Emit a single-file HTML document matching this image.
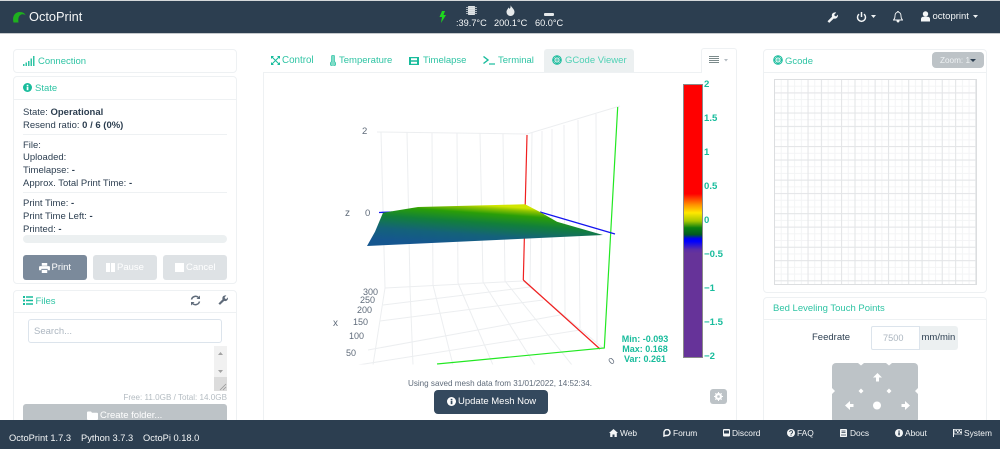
<!DOCTYPE html>
<html><head><meta charset="utf-8"><title>OctoPrint</title>
<style>
html,body{margin:0;padding:0;background:#fff}
#r{position:relative;width:1000px;height:449px;overflow:hidden;background:#fff;font-family:"Liberation Sans",sans-serif;font-size:9.5px;color:#2c3e50;filter:blur(.3px)}
#r div,#r span,#r svg{position:absolute}
.t{white-space:nowrap;line-height:12px;height:12px}
.g{color:#2fc4a4}
.w{color:#f4f6f7}
.box{border:1px solid #eef1f3;border-radius:4px;background:#fff;box-sizing:border-box}
.hr{height:1px;background:#eef1f3}
b{font-weight:bold}
.btn{border-radius:3px;box-sizing:border-box}
.cb{color:#18bc9c;font-weight:bold;font-size:9.600px;line-height:12px;left:704px;white-space:nowrap}
.ax{color:#5f6b7a;font-size:9px;line-height:12px;white-space:nowrap}
.st{color:#18bc9c;font-weight:bold;font-size:9px;line-height:10px;width:70px;left:610px;text-align:center}
</style></head><body><div id="r">

<!-- navbar -->
<div style="left:0;top:0;width:1000px;height:34px;background:#2c3e50;border-top:1px solid #d5d8da;border-bottom:1px solid #c5c9cc;box-sizing:border-box"></div>
<svg style="left:12px;top:10px" width="15" height="14" viewBox="0 0 15 14"><path d="M1.500 12.500C0 6 3 2 8 2c3 0 5 1.500 5.700 3.500-1.700-1.500-3.700-1.500-5.200-.5C6.500 6 6 9 6.500 12.500z" fill="#1eb01e"/></svg>
<span class="t w" style="left:29px;top:10px;font-size:12.800px;line-height:14px;height:14px">OctoPrint</span>
<svg style="left:439px;top:11px" width="7" height="12" viewBox="0 0 7 12"><path d="M3 0h3L4.500 4H7L2 12l1-6H0.500z" fill="#1ed81e"/></svg>
<svg style="left:466px;top:5px" width="11" height="11" viewBox="0 0 11 11"><rect x="2" y="1" width="7" height="9" rx=".7" fill="#dfe3e6"/><path d="M0 2.500h11M0 4.500h11M0 6.500h11M0 8.500h11" stroke="#c9ced2" stroke-width=".8"/></svg>
<span class="t w" style="left:456px;top:17px;font-size:9.200px">:39.7°C</span>
<svg style="left:506px;top:5px" width="9" height="11" viewBox="0 0 9 11"><path d="M4.500 0C5 2 8.500 4 8.500 7a4 4 0 0 1-8 0C.5 5 2 4 2.500 2.500c.5.500 1 1 1 1.500C4.500 3 4.800 1.500 4.500 0z" fill="#e6e9eb"/></svg>
<span class="t w" style="left:494px;top:17px;font-size:9.200px">200.1°C</span>
<div style="left:544px;top:12.500px;width:10px;height:3px;background:#e6e9eb;border-radius:1px"></div>
<span class="t w" style="left:535px;top:17px;font-size:9.200px">60.0°C</span>
<svg style="left:827px;top:12px" width="11" height="11" viewBox="0 0 11 11"><path d="M0.500 9.300L5 4.800C4.500 3 5 1.500 6.500.8 7.500.3 8.500.3 9.200.6L7.300 2.500l.4 1.500 1.500.4 1.600-1.800c.4 1.200 0 2.500-1 3.400-1 .8-2 .9-3 .5l-4.600 4.400z" fill="#f4f6f7"/></svg>
<svg style="left:856px;top:11px" width="11" height="12" viewBox="0 0 11 12"><path d="M3 3.200A4 4 0 1 0 8 3.200" fill="none" stroke="#f4f6f7" stroke-width="1.500"/><path d="M5.500 1v5" stroke="#f4f6f7" stroke-width="1.500"/></svg>
<svg style="left:871px;top:15px" width="5" height="3" viewBox="0 0 5 3"><path d="M0 0h5L2.500 3z" fill="#eef1f3"/></svg>
<svg style="left:893px;top:11px" width="10" height="12" viewBox="0 0 10 12"><path d="M5 .5c.5 0 .7.300.7.800C7.500 1.800 8 3 8 5c0 2 .5 3 1.500 4h-9C1.500 8 2 7 2 5c0-2 .5-3.200 2.300-3.700C4.300.8 4.500.5 5 .5zM4 10h2a1 1 0 0 1-2 0z" fill="none" stroke="#f4f6f7" stroke-width=".9"/></svg>
<svg style="left:921px;top:11px" width="9" height="11" viewBox="0 0 9 11"><circle cx="4.500" cy="3" r="2.700" fill="#f4f6f7"/><path d="M0 10.500V8c0-1.500 1-2.300 2.500-2.300h4C8 5.700 9 6.500 9 8v2.500z" fill="#f4f6f7"/></svg>
<span class="t w" style="left:932.500px;top:11px;font-size:9.500px">octoprint</span>
<svg style="left:973px;top:15px" width="5" height="3" viewBox="0 0 5 3"><path d="M0 0h5L2.500 3z" fill="#eef1f3"/></svg>

<!-- left column -->
<div class="box" style="left:13px;top:49px;width:224px;height:24px"></div>
<svg style="left:23px;top:56px" width="12" height="10" viewBox="0 0 12 10"><path d="M0 8h1.500v2H0zM2.500 6.500H4V10H2.500zM5 5h1.500v5H5zM7.500 2.500H9V10H7.500zM10 0h1.500v10H10z" fill="#2fc4a4"/></svg>
<span class="t g" style="left:38px;top:55.500px">Connection</span>
<div class="box" style="left:13px;top:76px;width:224px;height:208px"></div>
<div class="hr" style="left:13px;top:99px;width:224px"></div>
<svg style="left:23px;top:83px" width="9" height="9" viewBox="0 0 9 9"><circle cx="4.500" cy="4.500" r="4.500" fill="#18bc9c"/><rect x="3.700" y="3.700" width="1.700" height="3.500" fill="#fff"/><rect x="3.700" y="1.800" width="1.700" height="1.300" fill="#fff"/></svg>
<span class="t g" style="left:35px;top:82.500px">State</span>
<span class="t" style="left:23px;top:107px">State: <b>Operational</b></span>
<span class="t" style="left:23px;top:120px">Resend ratio: <b>0 / 6 (0%)</b></span>
<div class="hr" style="left:23px;top:134px;width:204px"></div>
<span class="t" style="left:23px;top:140px">File:</span>
<span class="t" style="left:23px;top:152px">Uploaded:</span>
<span class="t" style="left:23px;top:165px">Timelapse: <b>-</b></span>
<span class="t" style="left:23px;top:178px">Approx. Total Print Time: <b>-</b></span>
<div class="hr" style="left:23px;top:192px;width:204px"></div>
<span class="t" style="left:23px;top:198px">Print Time: <b>-</b></span>
<span class="t" style="left:23px;top:211px">Print Time Left: <b>-</b></span>
<span class="t" style="left:23px;top:224px">Printed: <b>-</b></span>
<div style="left:23px;top:235px;width:204px;height:8px;background:#ecf0f1;border-radius:4px"></div>
<div class="btn" style="left:23px;top:255px;width:64px;height:25px;background:#7b8a9b"></div>
<svg style="left:39px;top:262.500px" width="11" height="10" viewBox="0 0 12 11"><path d="M3 0h6v3H3zM1 3.500h10a1 1 0 0 1 1 1V8H9.500V6.500h-7V8H0V4.500a1 1 0 0 1 1-1zM3 7.500h6V11H3z" fill="#fff"/></svg>
<span class="t" style="left:51.500px;top:262px;color:#fff">Print</span>
<div class="btn" style="left:93px;top:255px;width:64px;height:25px;background:#dee2e5"></div>
<div style="left:106px;top:263px;width:3.500px;height:9px;background:#fff"></div><div style="left:111px;top:263px;width:3.500px;height:9px;background:#fff"></div>
<span class="t" style="left:117px;top:262px;color:#fff">Pause</span>
<div class="btn" style="left:163px;top:255px;width:64px;height:25px;background:#dee2e5"></div>
<div style="left:175px;top:263px;width:8.500px;height:9px;background:#fff"></div>
<span class="t" style="left:186px;top:262px;color:#fff">Cancel</span>

<div class="box" style="left:13px;top:290px;width:224px;height:140px"></div>
<div class="hr" style="left:13px;top:312px;width:224px"></div>
<svg style="left:23px;top:296px" width="10" height="9" viewBox="0 0 10 9"><path d="M0 0h2v2H0zM3 .3h7v1.500H3zM0 3.500h2v2H0zM3 3.800h7v1.500H3zM0 7h2v2H0zM3 7.200h7v1.500H3z" fill="#18bc9c"/></svg>
<span class="t g" style="left:35.500px;top:295.500px">Files</span>
<svg style="left:190px;top:295px" width="11" height="11" viewBox="0 0 11 11"><path d="M1.500 4.500A4.200 4.200 0 0 1 8.500 2.500M9.500 6.500A4.200 4.200 0 0 1 2.500 8.500" fill="none" stroke="#5f6b7a" stroke-width="1.500"/><path d="M10 .5v3.500H6.500zM1 10.500V7h3.500z" fill="#5f6b7a"/></svg>
<svg style="left:218px;top:295px" width="10" height="10" viewBox="0 0 11 11"><path d="M0.500 9.300L5 4.800C4.500 3 5 1.500 6.500.8 7.500.3 8.500.3 9.200.6L7.300 2.500l.4 1.500 1.500.4 1.600-1.800c.4 1.200 0 2.500-1 3.400-1 .8-2 .9-3 .5l-4.600 4.400z" fill="#5f6b7a"/></svg>
<div style="left:28px;top:319px;width:194px;height:24px;border:1px solid #dce4ec;border-radius:3px;box-sizing:border-box"></div>
<span class="t" style="left:34px;top:325.500px;color:#acb6c0">Search...</span>
<div style="left:214px;top:346px;width:13px;height:45px;background:#f1f1f1"></div>
<div style="left:214px;top:377px;width:13px;height:14px;background:#dcdcdc"></div>
<svg style="left:214px;top:350px" width="13" height="41" viewBox="0 0 13 41"><path d="M4 5l2.500-3L9 5zM4 20l2.500 3L9 20z" fill="#a3a3a3"/><path d="M6 40l6-6M9 40l3-3" stroke="#999" stroke-width=".8"/></svg>
<span class="t" style="left:97px;top:391.500px;color:#b4bcc2;font-size:8.100px;width:130px;text-align:right">Free: 11.0GB / Total: 14.0GB</span>
<div class="btn" style="left:23px;top:404px;width:204px;height:20px;background:#bdc3c7"></div>
<svg style="left:87px;top:411px" width="11" height="9" viewBox="0 0 11 9"><path d="M0 1.500a1 1 0 0 1 1-1h3l1 1.200h5a1 1 0 0 1 1 1V8a1 1 0 0 1-1 1H1a1 1 0 0 1-1-1z" fill="#fff"/></svg>
<span class="t" style="left:100px;top:410px;color:#fff">Create folder...</span>

<!-- center tabs -->
<div style="left:263px;top:72px;width:474px;height:352px;border:1px solid #eef1f3;box-sizing:border-box"></div>
<div style="left:544px;top:49px;width:90px;height:23px;background:#ecf0f1;border-radius:3px 3px 0 0"></div>
<div style="left:701px;top:48px;width:36px;height:25px;background:#fff;border:1px solid #eef1f3;border-bottom:0;border-radius:3px 3px 0 0;box-sizing:border-box"></div>
<svg style="left:271px;top:56px" width="9" height="9" viewBox="0 0 9 9"><path d="M0 0h3L0 3zM9 0v3L6 0zM0 9V6l3 3zM9 9H6l3-3z" fill="#18bc9c"/><path d="M1 1l7 7M8 1L1 8" stroke="#18bc9c" stroke-width="1"/></svg>
<span class="t g" style="left:282px;top:55px;font-size:9.800px">Control</span>
<svg style="left:330px;top:55px" width="6" height="11" viewBox="0 0 6 11"><path d="M1.500 1.500a1.500 1.500 0 0 1 3 0v5a2.700 2.700 0 1 1-3 0z" fill="#7fdcc7" stroke="#18bc9c" stroke-width=".6"/></svg>
<span class="t g" style="left:339px;top:55px">Temperature</span>
<svg style="left:409px;top:57px" width="10" height="8" viewBox="0 0 10 8"><path d="M0 0h10v8H0zM2 1.300v2h6v-2zM2 4.700v2h6v-2z" fill="#18bc9c" fill-rule="evenodd"/></svg>
<span class="t g" style="left:423px;top:55px">Timelapse</span>
<svg style="left:483px;top:56px" width="12" height="9" viewBox="0 0 12 9"><path d="M.5.500L5 4 .5 7.500" fill="none" stroke="#18bc9c" stroke-width="1.400"/><path d="M6 8h6" stroke="#18bc9c" stroke-width="1.200"/></svg>
<span class="t g" style="left:498px;top:55px">Terminal</span>
<svg style="left:552px;top:55px" width="10" height="10" viewBox="0 0 10 10"><circle cx="5" cy="5" r="4.300" fill="none" stroke="#18bc9c" stroke-width="1"/><path d="M5 1L1 5l4 4 4-4zM1 5h8M5 1v8" fill="none" stroke="#18bc9c" stroke-width=".8"/></svg>
<span class="t g" style="left:565px;top:55px;color:#4fd1b5">GCode Viewer</span>
<svg style="left:709px;top:56px" width="22" height="8" viewBox="0 0 22 8"><path d="M0 .5h10M0 2.500h10M0 4.500h10M0 6.500h10" stroke="#7b8a8b" stroke-width="1"/><path d="M15 3h4l-2 2.500z" fill="#b4bcc2"/></svg>

<!-- 3D plot -->
<svg style="left:263px;top:73px" width="420" height="292" viewBox="263 73 420 292">
<defs>
<linearGradient id="m" gradientUnits="userSpaceOnUse" x1="470" y1="204" x2="467" y2="246">
<stop offset="0" stop-color="#d2e600"/><stop offset=".07" stop-color="#8fc400"/><stop offset=".2" stop-color="#2a9e08"/><stop offset=".42" stop-color="#12803a"/><stop offset=".72" stop-color="#14627a"/><stop offset="1" stop-color="#15568f"/>
</linearGradient>
<clipPath id="pc"><rect x="263" y="73" width="420" height="291.500"/></clipPath>
</defs>
<g clip-path="url(#pc)" fill="none">
<g stroke="#eceef0" stroke-width="1">
<path d="M377 132L527 134L620 106"/>
<path d="M381 132L385 288M407 132L410 287M432 133L433 285M457 133L458 283M480 133L483 282M503 134L505 281"/>
<path d="M532 133L530 287M542 131L541 296M552 129L552 305M564 125L565 316M578 120L580 328M596 114L597 342"/>
<path d="M385 288L523 281L604 349M383 305L530 287M380 321L543 300M368 350L560 315M358 365L580 330"/>
<path d="M385 288L373 365M410 287L413 365M433 285L453 365M458 283L493 365M483 282L535 365M505 281L572 365"/>
</g>
<path d="M527 135L523.300 280" stroke="#f02020" stroke-width="1.200"/>
<path d="M523.300 280L600 349" stroke="#f02020" stroke-width="1.200"/>
<path d="M617.700 107L604.300 348L437 364" stroke="#22e822" stroke-width="1.200"/>
<path d="M379 212.500L392 212M540 212L615 234" stroke="#1414f0" stroke-width="1.300"/>
<path d="M383 212.700L418 207L525 204.300L540 212L557 221.700L603 235L367 246L375 231.700Z" fill="url(#m)"/>
</g>
</svg>
<span class="ax" style="left:362px;top:125.500px;font-size:9.500px">2</span>
<span class="ax" style="left:365px;top:207.500px;font-size:9.500px">0</span>
<span class="ax" style="left:345px;top:207.500px;font-size:10px">z</span>
<span class="ax" style="left:363px;top:285.500px">300</span>
<span class="ax" style="left:360px;top:293.500px">250</span>
<span class="ax" style="left:357px;top:303.500px">200</span>
<span class="ax" style="left:353px;top:315.500px">150</span>
<span class="ax" style="left:349px;top:329.500px">100</span>
<span class="ax" style="left:346px;top:346.500px">50</span>
<span class="ax" style="left:333px;top:317.500px;font-size:10px">x</span>
<span class="ax" style="left:609px;top:355px;transform:rotate(-40deg)">0</span>

<!-- colorbar -->
<div style="left:682.500px;top:84px;width:20px;height:274px;box-sizing:border-box;border:1px solid #8a8a8a;background:linear-gradient(to bottom,#f00 0,#f00 40%,#ff9000 44%,#ffe800 47%,#a8c800 50%,#0a8010 52.500%,#005a20 55%,#0000f0 56.500%,#0000ff 57.500%,#5a2ea8 60.500%,#663399 62%,#663399 100%)"></div>
<span class="cb" style="top:79px">2</span>
<span class="cb" style="top:113px">1.5</span>
<span class="cb" style="top:147px">1</span>
<span class="cb" style="top:181px">0.5</span>
<span class="cb" style="top:215px">0</span>
<span class="cb" style="top:249px">−0.5</span>
<span class="cb" style="top:283px">−1</span>
<span class="cb" style="top:317px">−1.5</span>
<span class="cb" style="top:351px">−2</span>
<span class="st" style="top:334px">Min: -0.093</span>
<span class="st" style="top:343.500px">Max: 0.168</span>
<span class="st" style="top:353.500px">Var: 0.261</span>
<div class="btn" style="left:710px;top:389px;width:17px;height:15px;background:#bdc3c7"></div>
<svg style="left:714px;top:392px" width="9" height="9" viewBox="0 0 9 9"><circle cx="4.500" cy="4.500" r="2.500" fill="none" stroke="#fff" stroke-width="2"/><path d="M4.500 0v9M0 4.500h9M1.300 1.300l6.400 6.400M7.700 1.300l-6.400 6.400" stroke="#fff" stroke-width="1"/><circle cx="4.500" cy="4.500" r="1.300" fill="#bdc3c7"/></svg>
<span class="t" style="left:400px;top:377.500px;width:200px;text-align:center;font-size:8.100px;color:#5f6b7a">Using saved mesh data from 31/01/2022, 14:52:34.</span>
<div class="btn" style="left:434px;top:390px;width:114px;height:24px;background:#34495e;border-radius:4px"></div>
<svg style="left:447px;top:397px" width="9" height="9" viewBox="0 0 9 9"><circle cx="4.500" cy="4.500" r="4.500" fill="#fff"/><rect x="3.700" y="3.700" width="1.700" height="3.500" fill="#34495e"/><rect x="3.700" y="1.800" width="1.700" height="1.300" fill="#34495e"/></svg>
<span class="t" style="left:458px;top:396px;color:#fff">Update Mesh Now</span>

<!-- right column -->
<div class="box" style="left:763px;top:49px;width:224px;height:244px"></div>
<div class="hr" style="left:763px;top:72px;width:224px"></div>
<svg style="left:773px;top:55px" width="10" height="10" viewBox="0 0 10 10"><circle cx="5" cy="5" r="4.300" fill="none" stroke="#18bc9c" stroke-width="1"/><path d="M5 1L1 5l4 4 4-4zM1 5h8M5 1v8" fill="none" stroke="#18bc9c" stroke-width=".8"/></svg>
<span class="t g" style="left:785px;top:55.500px">Gcode</span>
<div class="btn" style="left:932px;top:52px;width:52px;height:16px;background:#bdc3c7;border-radius:4px"></div>
<span class="t" style="left:940px;top:54.500px;color:#eef1f3;font-size:8.200px">Zoom: 1</span>
<svg style="left:970px;top:58.500px" width="6" height="3" viewBox="0 0 6 3"><path d="M0 0h6L3 3z" fill="#2c3e50"/></svg>
<svg style="left:774px;top:79px" width="203" height="206" viewBox="0 0 203 206">
<defs>
<pattern id="gm" width="6.710" height="6.710" patternUnits="userSpaceOnUse"><path d="M.5 0V6.710M0 .5H6.710" stroke="#f3f4f5" stroke-width="1" fill="none"/></pattern>
<pattern id="gM" width="33.550" height="33.550" patternUnits="userSpaceOnUse"><path d="M.5 0V33.550M13.900 0V33.550M0 .5H33.550M0 13.900H33.550" stroke="#e3e5e7" stroke-width="1" fill="none"/></pattern>
</defs>
<rect width="203" height="206" fill="url(#gm)"/><rect width="203" height="206" fill="url(#gM)"/>
<rect x=".5" y=".5" width="202" height="205" fill="none" stroke="#dcdee0"/>
</svg>

<div class="box" style="left:763px;top:297px;width:224px;height:140px"></div>
<div class="hr" style="left:763px;top:319px;width:224px"></div>
<span class="t g" style="left:773px;top:302.500px">Bed Leveling Touch Points</span>
<span class="t" style="left:812px;top:331.500px">Feedrate</span>
<div style="left:871px;top:326px;width:49px;height:24px;border:1px solid #dce4ec;box-sizing:border-box;border-radius:2px 0 0 2px"></div>
<span class="t" style="left:883px;top:332px;color:#acb6c0;font-size:9.200px">7500</span>
<div style="left:919.500px;top:326px;width:38.500px;height:24px;background:#ecf0f1;border-radius:0 3px 3px 0"></div>
<span class="t" style="left:921.500px;top:332px">mm/min</span>
<div class="btn" style="left:832px;top:363px;width:86px;height:60px;background:#bdc3c7;border-radius:4px"></div>
<svg style="left:830px;top:361px" width="90" height="62" viewBox="0 0 90 62">
<g fill="#fff"><path d="M28 2l3 2.500 3-2.500zM56 2l3 2.500 3-2.500zM2 27l3 3-3 3zM88 27l-3 3 3 3z"/>
<path d="M31 27.500l2.500 2.500-2.500 2.500-2.500-2.500zM59 27.500l2.500 2.500-2.500 2.500-2.500-2.500z"/>
<path d="M47.500 12l-4.500 4.500h3v4h3v-4h3z"/><path d="M15 44.500l5-4.500v3h3.500v3H20v3z"/><path d="M80 44.500l-5-4.500v3h-3.500v3H75v3z"/>
<circle cx="47" cy="44.500" r="4"/></g>
</svg>

<!-- footer -->
<div style="left:0;top:420px;width:1000px;height:29px;background:#2c3e50"></div>
<span class="t w" style="left:9px;top:431.500px;font-size:9.300px">OctoPrint 1.7.3</span>
<span class="t w" style="left:81px;top:431.500px;font-size:9.300px">Python 3.7.3</span>
<span class="t w" style="left:143px;top:431.500px;font-size:9.300px">OctoPi 0.18.0</span>
<svg style="left:609px;top:429px" width="9" height="8" viewBox="0 0 9 8"><path d="M4.500 0L9 4H7.800v4H5.500V5.500h-2V8H1.200V4H0z" fill="#f4f6f7"/></svg>
<span class="t w" style="left:620px;top:427px;font-size:8.400px">Web</span>
<svg style="left:663px;top:429px" width="8" height="8" viewBox="0 0 8 8"><path d="M1 7V3.500A3 3 0 1 1 4 6.500H2.500z" fill="none" stroke="#f4f6f7" stroke-width="1.500"/></svg>
<span class="t w" style="left:673px;top:427px;font-size:8.400px">Forum</span>
<svg style="left:723px;top:429px" width="7" height="8" viewBox="0 0 7 8"><rect width="7" height="7.500" rx="1" fill="#f4f6f7"/><rect x="1" y="1.500" width="5" height="3" fill="#2c3e50"/></svg>
<span class="t w" style="left:732px;top:427px;font-size:8.400px">Discord</span>
<svg style="left:787px;top:429px" width="8" height="8" viewBox="0 0 8 8"><circle cx="4" cy="4" r="4" fill="#f4f6f7"/><path d="M2.700 3a1.400 1.400 0 1 1 1.900 1.300c-.4.200-.6.400-.6.900" fill="none" stroke="#2c3e50" stroke-width=".9"/><rect x="3.500" y="5.700" width="1" height="1" fill="#2c3e50"/></svg>
<span class="t w" style="left:797px;top:427px;font-size:8.400px">FAQ</span>
<svg style="left:840px;top:429px" width="7" height="8" viewBox="0 0 7 8"><rect width="7" height="8" rx=".8" fill="#f4f6f7"/><path d="M1.500 2h4M1.500 3.500h4M1 6h5" stroke="#2c3e50" stroke-width=".7"/></svg>
<span class="t w" style="left:850px;top:427px;font-size:8.400px">Docs</span>
<svg style="left:895px;top:429px" width="8" height="8" viewBox="0 0 8 8"><circle cx="4" cy="4" r="4" fill="#f4f6f7"/><rect x="3.300" y="3.300" width="1.500" height="3" fill="#2c3e50"/><rect x="3.300" y="1.600" width="1.500" height="1.100" fill="#2c3e50"/></svg>
<span class="t w" style="left:905px;top:427px;font-size:8.400px">About</span>
<svg style="left:953px;top:429px" width="9" height="8" viewBox="0 0 9 8"><path d="M.5 0v8" stroke="#f4f6f7"/><path d="M1 .5h8v4.500H1z" fill="none" stroke="#f4f6f7" stroke-width=".8"/><path d="M2.500 1h1.500v1.500H2.500zM5.500 1h1.500v1.500H5.500zM4 2.500h1.500V4H4zM7 2.500h1.500V4H7z" fill="#f4f6f7"/></svg>
<span class="t w" style="left:964px;top:427px;font-size:8.400px">System</span>
</div></body></html>
